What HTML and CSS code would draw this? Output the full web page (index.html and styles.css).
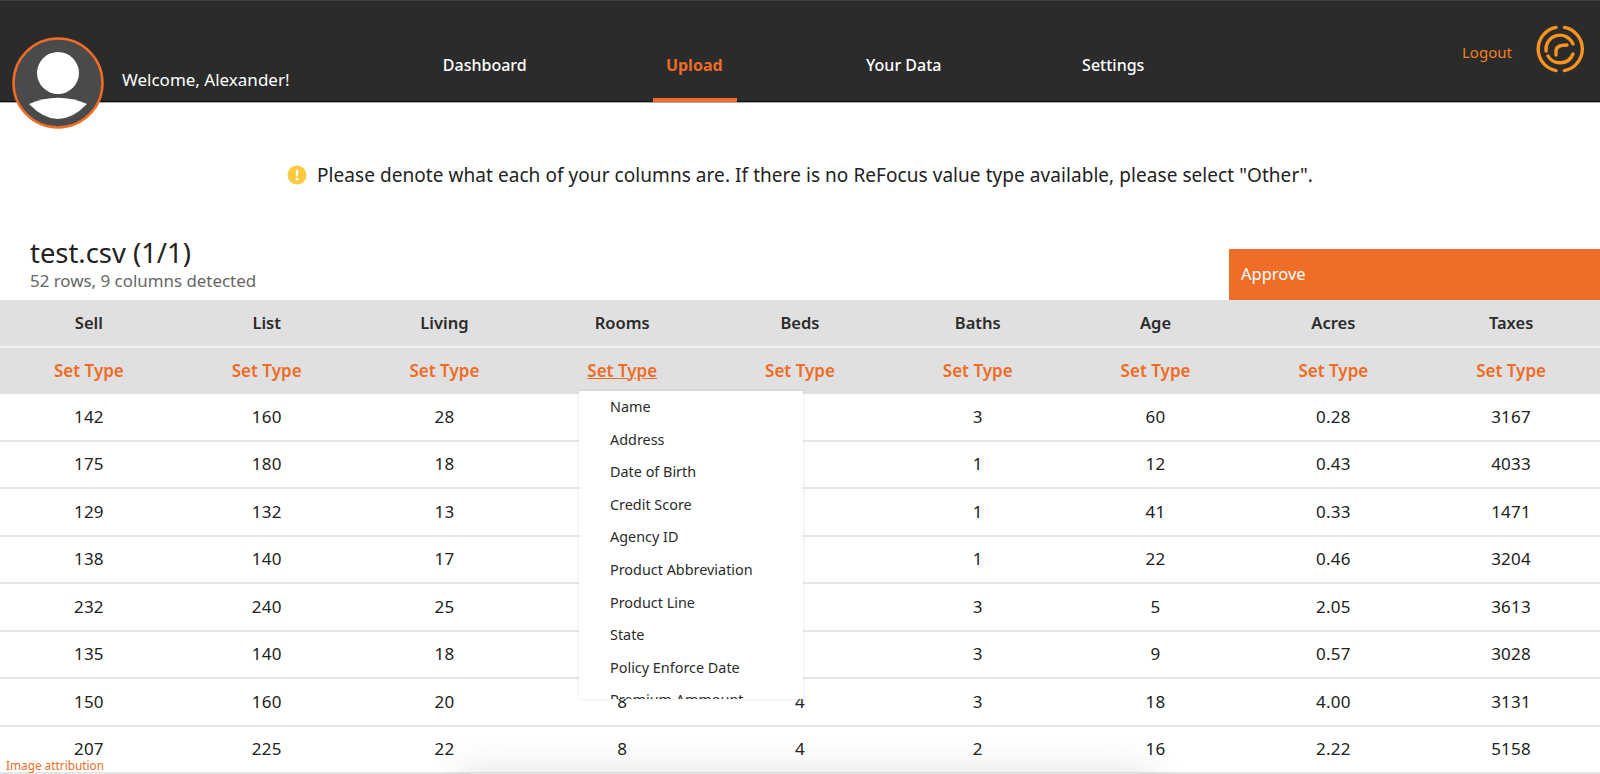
FILE: index.html
```html
<!DOCTYPE html>
<html lang="en">
<head>
<meta charset="utf-8">
<title>Upload</title>
<link rel="stylesheet" href="styles.css">
</head>
<body>
<header class="topbar">
  <div class="user">
    <div class="avatar">
      <svg viewBox="0 0 92 92" width="92" height="92"><circle cx="46" cy="46" r="44.5" fill="#4a4a4a" stroke="#ee6c25" stroke-width="2.5"/><circle cx="46" cy="36" r="21" fill="#fff"/><path d="M17 67 Q46 97 75 67 Q46 54.4 17 67Z" fill="#fff"/></svg>
    </div>
    <span class="welcome">Welcome, Alexander!</span>
  </div>
  <nav class="nav">
    <a class="tab">Dashboard</a>
    <a class="tab active">Upload</a>
    <a class="tab">Your Data</a>
    <a class="tab">Settings</a>
  </nav>
  <div class="account">
    <a class="logout">Logout</a>
    <svg class="logo" viewBox="0 0 48 48" width="48" height="48" fill="none" stroke="#f7931e" stroke-width="3.4" stroke-linecap="round"><path d="M20 2.4A22 22 0 0 0 20 45.6"/><path d="M28.5 2.4A22 22 0 0 1 28.5 45.6"/><path d="M10.1 26A14 14 0 0 1 37 19"/><path d="M12 31A14 14 0 0 0 37 29"/><path d="M20 30V26Q20 20 31 20"/></svg>
  </div>
</header>

<main>
  <p class="notice">
    <svg viewBox="0 0 20 20" width="20" height="20"><circle cx="10" cy="10" r="9.5" fill="#fdc93f"/><rect x="8.8" y="4.5" width="2.4" height="7" rx="1" fill="#fff"/><circle cx="10" cy="14.2" r="1.4" fill="#fff"/></svg>
    <span>Please denote what each of your columns are. If there is no ReFocus value type available, please select "Other".</span>
  </p>

  <section class="file-head">
    <div>
      <h1 class="file-name">test.csv (1/1)</h1>
      <p class="file-meta">52 rows, 9 columns detected</p>
    </div>
    <button class="approve">Approve</button>
  </section>

  <section class="table">
    <div class="row names"><span>Sell</span><span>List</span><span>Living</span><span>Rooms</span><span>Beds</span><span>Baths</span><span>Age</span><span>Acres</span><span>Taxes</span></div>
    <div class="row types"><span>Set Type</span><span>Set Type</span><span>Set Type</span><span class="open">Set Type</span><span>Set Type</span><span>Set Type</span><span>Set Type</span><span>Set Type</span><span>Set Type</span></div>
    <div class="row data"><span>142</span><span>160</span><span>28</span><span></span><span></span><span>3</span><span>60</span><span>0.28</span><span>3167</span></div>
    <div class="row data"><span>175</span><span>180</span><span>18</span><span></span><span></span><span>1</span><span>12</span><span>0.43</span><span>4033</span></div>
    <div class="row data"><span>129</span><span>132</span><span>13</span><span></span><span></span><span>1</span><span>41</span><span>0.33</span><span>1471</span></div>
    <div class="row data"><span>138</span><span>140</span><span>17</span><span></span><span></span><span>1</span><span>22</span><span>0.46</span><span>3204</span></div>
    <div class="row data"><span>232</span><span>240</span><span>25</span><span></span><span></span><span>3</span><span>5</span><span>2.05</span><span>3613</span></div>
    <div class="row data"><span>135</span><span>140</span><span>18</span><span></span><span></span><span>3</span><span>9</span><span>0.57</span><span>3028</span></div>
    <div class="row data"><span>150</span><span>160</span><span>20</span><span>8</span><span>4</span><span>3</span><span>18</span><span>4.00</span><span>3131</span></div>
    <div class="row data"><span>207</span><span>225</span><span>22</span><span>8</span><span>4</span><span>2</span><span>16</span><span>2.22</span><span>5158</span></div>
    <ul class="menu">
      <li>Name</li><li>Address</li><li>Date of Birth</li><li>Credit Score</li><li>Agency ID</li><li>Product Abbreviation</li><li>Product Line</li><li>State</li><li>Policy Enforce Date</li><li>Premium Ammount</li>
    </ul>
  </section>
</main>
<div class="sheet"></div>
<a class="attribution">Image attribution</a>
</body>
</html>
```

FILE: styles.css
```css
* { box-sizing: border-box; }
html, body { height: 100%; }
body {
  margin: 0;
  height: 774px;
  overflow: hidden;
  position: relative;
  background: #fff;
  font-family: "Noto Sans", "Liberation Sans", sans-serif;
  color: #1f1f1f;
}
.topbar {
  height: 103px;
  background: #2b2b2b;
  border-top: 1px solid #3d3d3d;
  border-bottom: 1px solid #a8a8a8;
  box-shadow: inset 0 -1px 0 #111;
  display: flex;
  color: #fff;
  position: relative;
}
.user { width: 380px; flex: none; display: flex; align-items: flex-start; padding-left: 12px; }
.avatar { width: 92px; height: 92px; margin-top: 36px; position: relative; z-index: 2; flex: none; }
.avatar svg { display: block; }
.welcome { margin: 68px 0 0 18px; font-size: 17px; line-height: 22px; white-space: nowrap; }
.nav { display: flex; flex: none; width: 838px; }
.tab { width: 209.5px; flex: none; padding-top: 53px; font-size: 16px; line-height: 22px; font-weight: 500; text-align: center; position: relative; }
.tab.active { color: #ee6c25; font-weight: 700; }
.tab.active::after { content: ""; position: absolute; left: 63.5px; width: 84px; bottom: 0; height: 4px; background: #ee6c25; }
.account { flex: 1; display: flex; align-items: flex-start; padding-left: 244px; }
.logout { color: #f0801f; font-size: 15px; line-height: 20px; margin-top: 41px; }
.logo { margin: 24px 0 0 24px; flex: none; }
.notice { margin: 0; padding-top: 60px; height: 140px; display: flex; justify-content: center; align-items: flex-start; gap: 10px; font-size: 19px; line-height: 24px; letter-spacing: .06px; color: #222; }
.notice svg { margin-top: 2px; flex: none; }
.file-head { height: 57px; display: flex; justify-content: space-between; align-items: flex-end; padding-left: 30px; }
.file-name { margin: 0 0 2px; font-size: 27.4px; line-height: 32px; font-weight: 400; color: #222; }
.file-meta { margin: 0 0 9px; font-size: 16.9px; line-height: 20px; color: #666; }
.approve { width: 371px; height: 51px; border: 0; background: #ee6d27; color: #fff; font: inherit; font-size: 16.5px; text-align: left; padding: 0 12px 2px; }
.table { position: relative; }
.row { display: grid; grid-template-columns: repeat(9, 1fr); align-items: center; text-align: center; }
.names { height: 48px; padding-bottom: 2px; background: #e0e0e0; border-bottom: 2px solid #f2f2f2; font-weight: 600; font-size: 16.5px; color: #2b2b2b; }
.types { height: 46px; padding-bottom: 2px; background: #e0e0e0; font-weight: 600; font-size: 17px; color: #ee6c25; }
.open { text-decoration: underline; }
.data { height: 47.5px; padding-bottom: 1px; border-bottom: 2px solid #e6e6e6; font-size: 17px; letter-spacing: .25px; color: #222; }
.menu { position: absolute; top: 91px; left: 579px; width: 224px; height: 308px; margin: 0; padding: 0 0 0 31px; list-style: none; overflow: hidden; background: #fff; box-shadow: 0 0 3px rgba(0,0,0,.12); font-size: 14.4px; color: #2b2b2b; }
.menu li { height: 32.6px; line-height: 32.6px; }
.sheet { position: absolute; left: 470px; width: 670px; top: 773px; height: 1px; box-shadow: 0 12px 36px 12px rgba(0,0,0,.15); }
.attribution { position: absolute; left: 6px; top: 756px; font-size: 11.8px; line-height: 18px; color: #ee6c25; }
```
